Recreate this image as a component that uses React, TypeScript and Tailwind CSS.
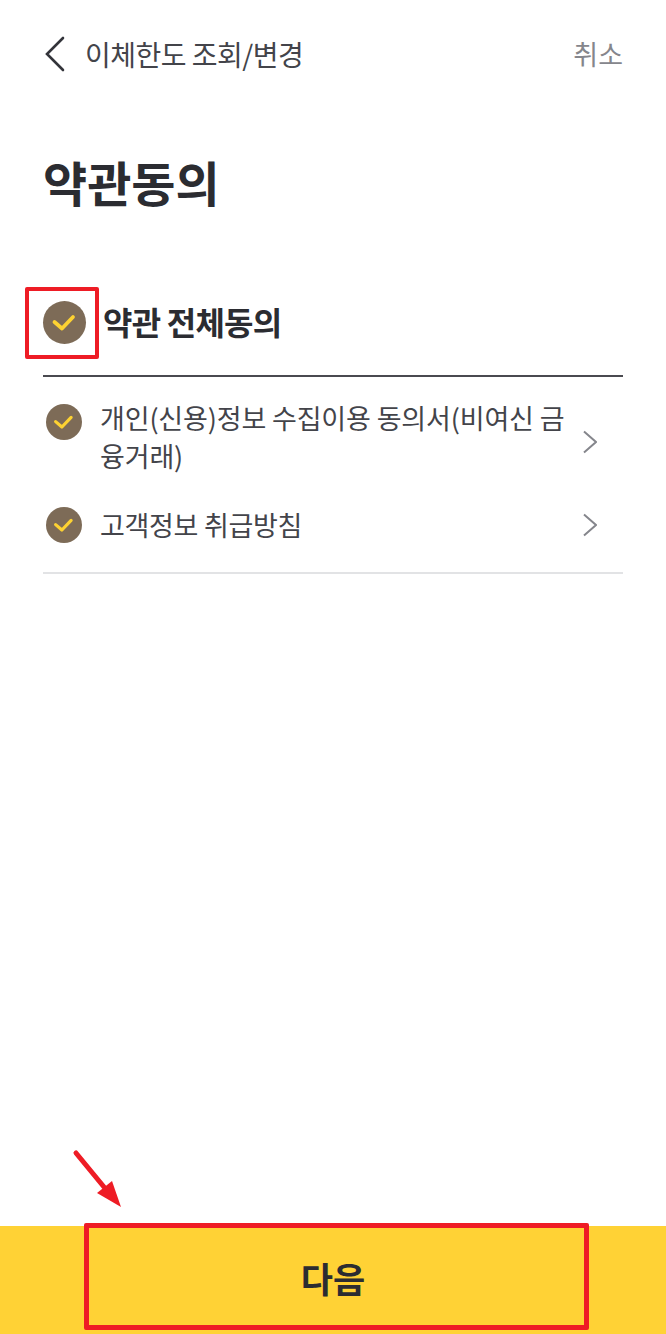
import React from 'react';

const font = { fontFamily: '"Noto Sans CJK KR", sans-serif' };

const CheckCircle: React.FC<{ big?: boolean }> = ({ big }) => (
  <div className={`${big ? 'h-[43px] w-[43px]' : 'h-[36px] w-[36px]'} shrink-0 rounded-full bg-[#7d6b57]`}>
    <svg viewBox="0 0 43 43" className="h-full w-full" fill="none" stroke="#fdd232" strokeWidth="3.8" strokeLinecap="round" strokeLinejoin="round">
      <path d="M11.5 21l7.5 6.5 11-11.5" />
    </svg>
  </div>
);

const Chevron = () => (
  <svg viewBox="0 0 14 24" className="h-[24px] w-[14px] shrink-0" fill="none" stroke="#85868c" strokeWidth="2">
    <path d="M1 1.5L13 12 1 22.5" />
  </svg>
);

export default function App() {
  return (
    <div className="relative flex h-[1334px] w-[666px] flex-col overflow-hidden bg-white" style={font}>
      {/* header */}
      <div className="flex h-[107px] items-center justify-between pl-[45px] pr-[43px]">
        <div className="flex items-center">
          <svg viewBox="0 0 20 36" className="h-[36px] w-[20px]" fill="none" stroke="#33343a" strokeWidth="2.6" strokeLinecap="round">
            <path d="M18 2L2 18l16 16" />
          </svg>
          <span className="ml-[20px] text-[28px] leading-[40px] tracking-[-0.5px] text-[#43444a]">이체한도 조회/변경</span>
        </div>
        <span className="text-[27px] leading-[40px] text-[#85868c]">취소</span>
      </div>

      <h1 className="mt-[40px] pl-[43px] text-[48px] font-bold leading-[68px] text-[#2b2c31]">약관동의</h1>

      {/* all agree */}
      <div className="mt-[83px] flex items-center pl-[43px]">
        <div className="mt-[3px]"><CheckCircle big /></div>
        <span className="ml-[17px] text-[32px] font-bold leading-[44px] tracking-[-0.8px] text-[#2b2c31]">약관 전체동의</span>
      </div>
      <div className="mx-[43px] mt-[31px] h-[2px] bg-[#4a4a50]" />

      {/* terms */}
      <div className="mx-[43px] flex items-start pt-[22px]">
        <div className="ml-[3px] mt-[5px]"><CheckCircle /></div>
        <span className="ml-[18px] w-[470px] text-[27px] leading-[38px] tracking-[-0.15px] text-[#43444a]">개인(신용)정보 수집이용 동의서(비여신 금융거래)</span>
        <div className="ml-[13px] mt-[31px]"><Chevron /></div>
      </div>
      <div className="mx-[43px] mt-[31px] flex items-center">
        <div className="ml-[3px]"><CheckCircle /></div>
        <span className="ml-[18px] w-[470px] text-[27px] leading-[38px] tracking-[-0.3px] text-[#43444a]">고객정보 취급방침</span>
        <div className="ml-[13px]"><Chevron /></div>
      </div>
      <div className="mx-[43px] mt-[28px] h-[2px] bg-[#e2e3e5]" />

      {/* next */}
      <div className="mt-auto flex h-[108px] items-center justify-center bg-[#ffd235] pb-[4px]">
        <span className="text-[35px] font-bold leading-[48px] text-[#2b2c31]">다음</span>
      </div>

      {/* red annotations */}
      <div className="absolute left-[25px] top-[287px] h-[72px] w-[74px] rounded-[2px] border-[4px] border-[#ee1c25]" />
      <div className="absolute left-[84px] top-[1223px] h-[107px] w-[505px] rounded-[2px] border-[5px] border-[#ee1c25]" />
      <svg className="absolute left-[70px] top-[1148px] h-[62px] w-[54px]" viewBox="0 0 54 62">
        <path d="M6 5L34 39" stroke="#ee1c25" strokeWidth="5" strokeLinecap="round" />
        <path d="M51 59L27 45 42 33z" fill="#ee1c25" />
      </svg>
    </div>
  );
}
